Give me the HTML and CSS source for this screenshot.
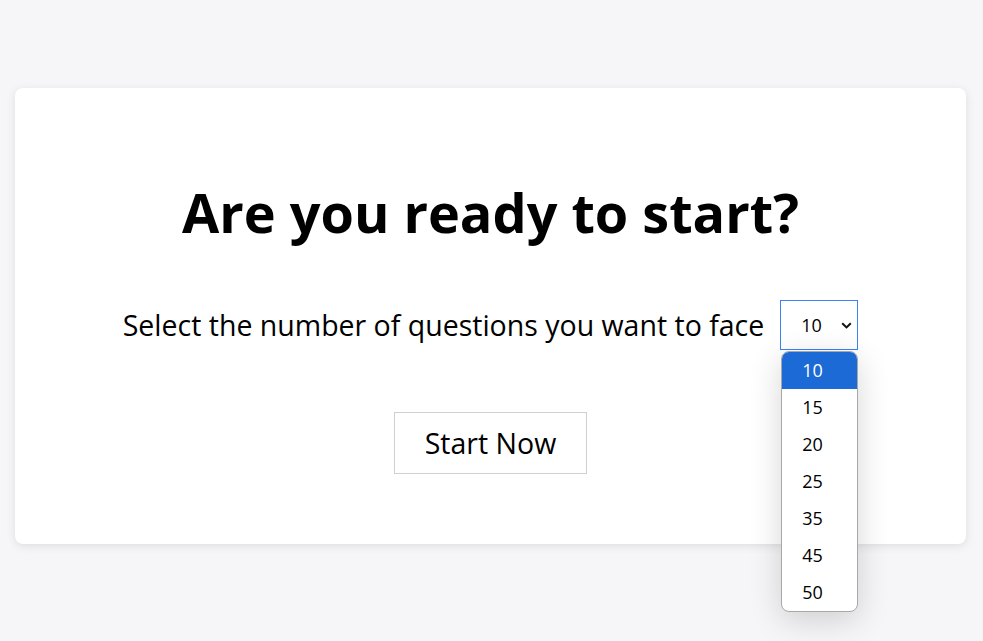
FILE: index.html
```html
<!DOCTYPE html>
<html lang="en">
<head>
<meta charset="utf-8">
<title>Quiz</title>
<link rel="stylesheet" href="styles.css">
</head>
<body>
<main class="page">
  <section class="card">
    <h1 class="title">Are you ready to start?</h1>
    <div class="row">
      <label class="label" for="count">Select the number of questions you want to face</label>
      <div class="select-wrap">
        <select id="count" class="select">
          <option>10</option><option>15</option><option>20</option><option>25</option><option>35</option><option>45</option><option>50</option>
        </select>
        <svg class="chev" width="11" height="7" viewBox="0 0 11 7"><path d="M1.2 1.2 L5.5 5.4 L9.8 1.2" fill="none" stroke="#111" stroke-width="2"/></svg>
        <ul class="menu">
          <li class="opt active">10</li>
          <li class="opt">15</li>
          <li class="opt">20</li>
          <li class="opt">25</li>
          <li class="opt">35</li>
          <li class="opt">45</li>
          <li class="opt">50</li>
        </ul>
      </div>
    </div>
    <button class="start">Start Now</button>
  </section>
</main>
</body>
</html>
```
FILE: styles.css
```css
* { box-sizing: border-box; }
html, body { margin: 0; padding: 0; }
body {
  background: #f6f6f8;
  font-family: "Open Sans", "Noto Sans", sans-serif;
  color: #000;
  width: 983px;
  height: 641px;
  overflow: hidden;
}
.page {
  padding: 88px 17px 0 15px;
}
.card {
  background: #fff;
  border-radius: 8px;
  box-shadow: 0 2px 10px rgba(0,0,0,0.10);
  height: 456px;
  display: flex;
  flex-direction: column;
  align-items: center;
  padding-top: 92px;
}
.title {
  margin: 0;
  font-size: 54px;
  font-weight: 700;
  line-height: 64px;
}
.row {
  display: flex;
  align-items: center;
  gap: 16px;
  margin-top: 56px;
}
.label {
  font-size: 28.5px;
  line-height: 40px;
}
.select-wrap {
  position: relative;
  width: 78px;
  height: 50px;
}
.select {
  appearance: none;
  -webkit-appearance: none;
  width: 78px;
  height: 50px;
  border: 1px solid #3b82f6;
  border-radius: 0;
  background: #fff;
  font-family: inherit;
  font-size: 18px;
  padding: 0 0 0 20px;
  color: #000;
  outline: none;
}
.chev {
  position: absolute;
  right: 6px;
  top: 22px;
  pointer-events: none;
}
.menu {
  position: absolute;
  left: 1px;
  top: 51px;
  width: 77px;
  margin: 0;
  padding: 0;
  list-style: none;
  background: #fff;
  border: 1px solid #a8a8a8;
  border-radius: 8px;
  box-shadow: 0 8px 32px rgba(0,0,0,0.16);
  overflow: hidden;
}
.opt {
  height: 37px;
  line-height: 37px;
  padding-left: 20px;
  font-size: 18px;
}
.opt.active {
  background: #1b6ad6;
  color: #fff;
}
.start {
  margin-top: 62px;
  width: 193px;
  height: 62px;
  background: #fff;
  border: 1px solid #cfd0d6;
  font-family: inherit;
  font-size: 28.5px;
  color: #000;
  cursor: pointer;
}
```
